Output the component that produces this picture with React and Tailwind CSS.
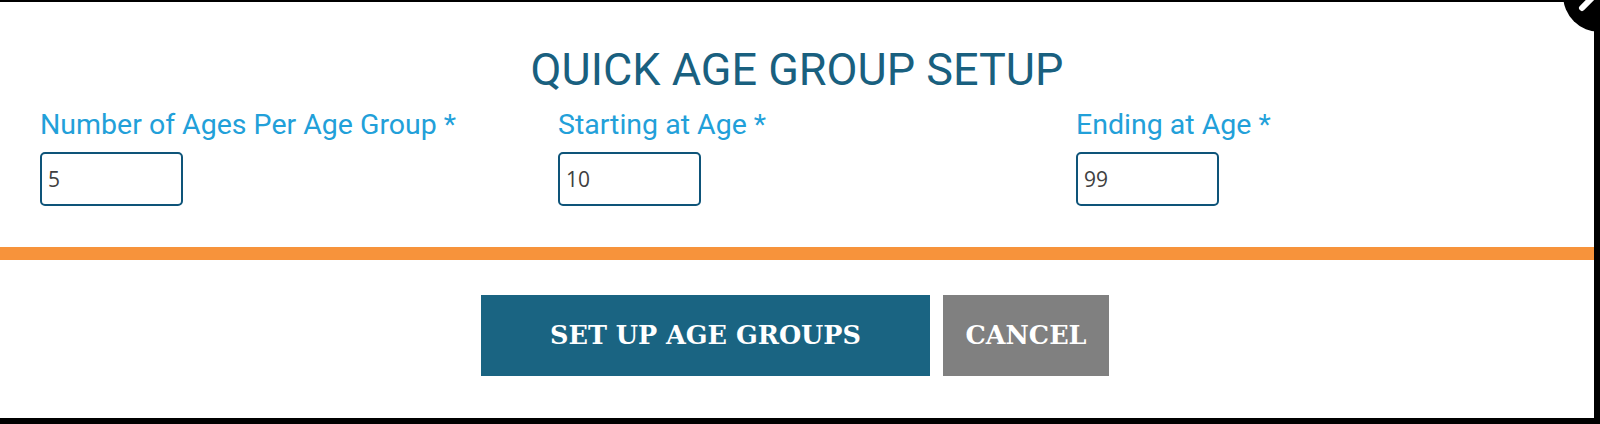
import React from "react";

const fields = [
    { label: "Number of Ages Per Age Group *", value: "5" },
    { label: "Starting at Age *", value: "10" },
    { label: "Ending at Age *", value: "99" },
];

export default function App() {
    return (
        <div className="w-[1600px] h-[424px] bg-black relative overflow-hidden">
            {/* modal panel */}
            <div className="w-[1594px] h-[416px] mt-[2px] bg-white flex flex-col">
                <h2 className="mt-[45px] text-center text-[45px] leading-none text-[#19607f] font-['Roboto',sans-serif]">
                    QUICK AGE GROUP SETUP
                </h2>

                <div className="grid grid-cols-3 w-[1554px] ml-[40px] mt-[19px]">
                    {fields.map((f) => (
                        <div key={f.label} className="flex flex-col">
                            <label className="text-[28.5px] leading-none text-[#22a0d9] font-['Roboto',sans-serif]">
                                {f.label}
                            </label>
                            <input
                                readOnly
                                value={f.value}
                                className="mt-[12px] w-[143px] h-[54px] border-2 border-[#0e5479] rounded-[5px] pl-[6px] text-[21px] text-[#404040] font-['Open_Sans',sans-serif] outline-none"
                            />
                        </div>
                    ))}
                </div>

                <div className="mt-[41px] h-[13px] bg-[#f7933b]" />

                <div className="mt-[35px] pr-[4px] flex justify-center gap-[13px]">
                    <button className="w-[449px] h-[81px] bg-[#1a6482] text-white text-[25.5px] font-bold font-['DejaVu_Serif',serif]">
                        SET UP AGE GROUPS
                    </button>
                    <button className="w-[166px] h-[81px] bg-[#808080] text-white text-[25.5px] font-bold font-['DejaVu_Serif',serif]">
                        CANCEL
                    </button>
                </div>
            </div>

            {/* close button, cut off at the corner */}
            <div className="absolute left-[1563px] top-[-42px] w-[74px] h-[74px] rounded-full bg-black">
                <svg className="absolute left-[14px] top-[38px]" width="30" height="30" viewBox="0 0 30 30">
                    <path d="M15 2 L5 12" stroke="white" strokeWidth="6" strokeLinecap="round" />
                </svg>
            </div>
        </div>
    );
}
